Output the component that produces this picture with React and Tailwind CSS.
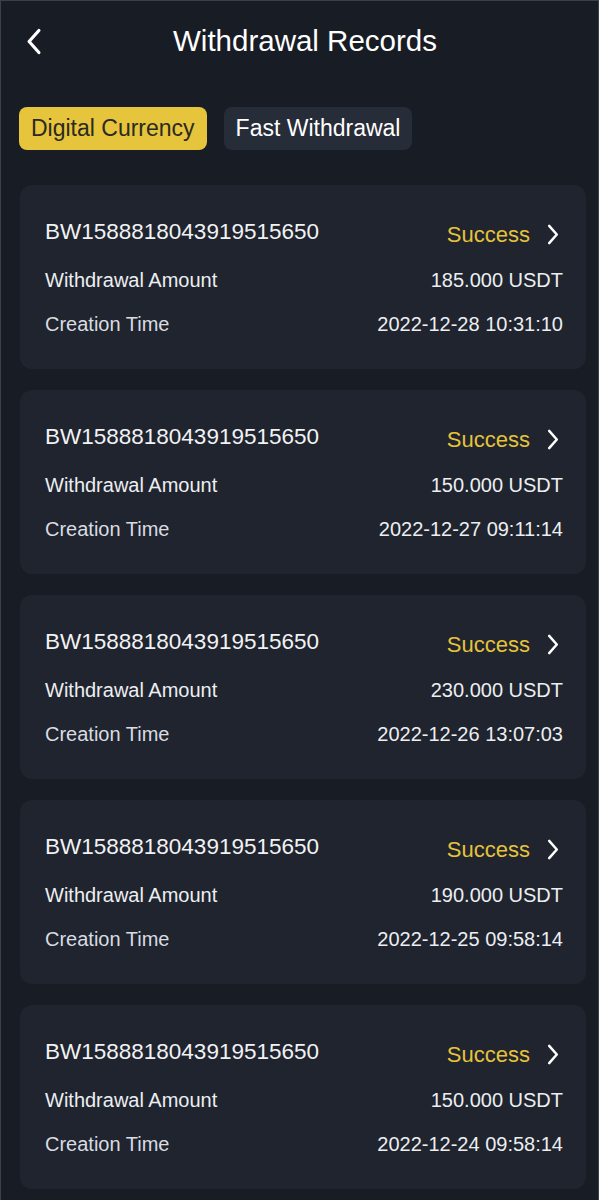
import { useState } from 'react';

const records = [
  { id: 'BW1588818043919515650', amount: '185.000 USDT', time: '2022-12-28 10:31:10' },
  { id: 'BW1588818043919515650', amount: '150.000 USDT', time: '2022-12-27 09:11:14' },
  { id: 'BW1588818043919515650', amount: '230.000 USDT', time: '2022-12-26 13:07:03' },
  { id: 'BW1588818043919515650', amount: '190.000 USDT', time: '2022-12-25 09:58:14' },
  { id: 'BW1588818043919515650', amount: '150.000 USDT', time: '2022-12-24 09:58:14' },
];

const tabs = ['Digital Currency', 'Fast Withdrawal'];

function Chevron({ dir = 'right', className }) {
  return (
    <svg className={className} viewBox="0 0 12 22" fill="none" stroke="currentColor" strokeWidth={2.6} strokeLinecap="round" strokeLinejoin="round">
      <path d={dir === 'right' ? 'M2 2l8 9-8 9' : 'M10 2L2 11l8 9'} />
    </svg>
  );
}

function RecordCard({ r }) {
  return (
    <div className="bg-[#1f242e] rounded-[12px] pl-[25px] pr-[23px] pt-[32px] pb-[31px] mb-[21px]">
      <div className="flex items-center justify-between h-[30px]">
        <span className="text-[22.5px] text-[#f1f2f4]">{r.id}</span>
        <div className="flex items-center gap-[17px] pt-[5px]">
          <span className="text-[22px] text-[#e6c33b]">Success</span>
          <Chevron className="w-[12px] h-[21px] text-white mr-[4px]" />
        </div>
      </div>
      <div className="flex items-center justify-between h-[28px] mt-[19px] text-[20px] text-[#eceef1]">
        <span>Withdrawal Amount</span>
        <span>{r.amount}</span>
      </div>
      <div className="flex items-center justify-between h-[28px] mt-[16px] text-[20px] text-[#eceef1]">
        <span className="text-[#d9dce1]">Creation Time</span>
        <span>{r.time}</span>
      </div>
    </div>
  );
}

export default function App() {
  const [active, setActive] = useState(0);

  return (
    <div className="w-[599px] min-h-[1200px] bg-[#181c24] border border-[#3b4049] font-[family-name:'Liberation_Sans',Arial,sans-serif] overflow-hidden">
      <div className="relative flex items-center justify-center h-[81px]">
        <Chevron dir="left" className="absolute left-[25px] top-[27px] w-[16px] h-[27px] text-white" />
        <h1 className="text-[29.5px] text-white pl-[11px]">Withdrawal Records</h1>
      </div>

      <div className="flex gap-[17px] px-[18px] mt-[25px]">
        {tabs.map((t, i) => (
          <button
            key={t}
            onClick={() => setActive(i)}
            className={
              'h-[43px] px-[12px] rounded-[8px] text-[23px] ' +
              (active === i ? 'bg-[#e6c43b] text-[#2b2a22]' : 'bg-[#262c38] text-white')
            }
          >
            {t}
          </button>
        ))}
      </div>

      <div className="pl-[19px] pr-[12px] mt-[35px]">
        {records.map((r, i) => (
          <RecordCard key={i} r={r} />
        ))}
      </div>
    </div>
  );
}
